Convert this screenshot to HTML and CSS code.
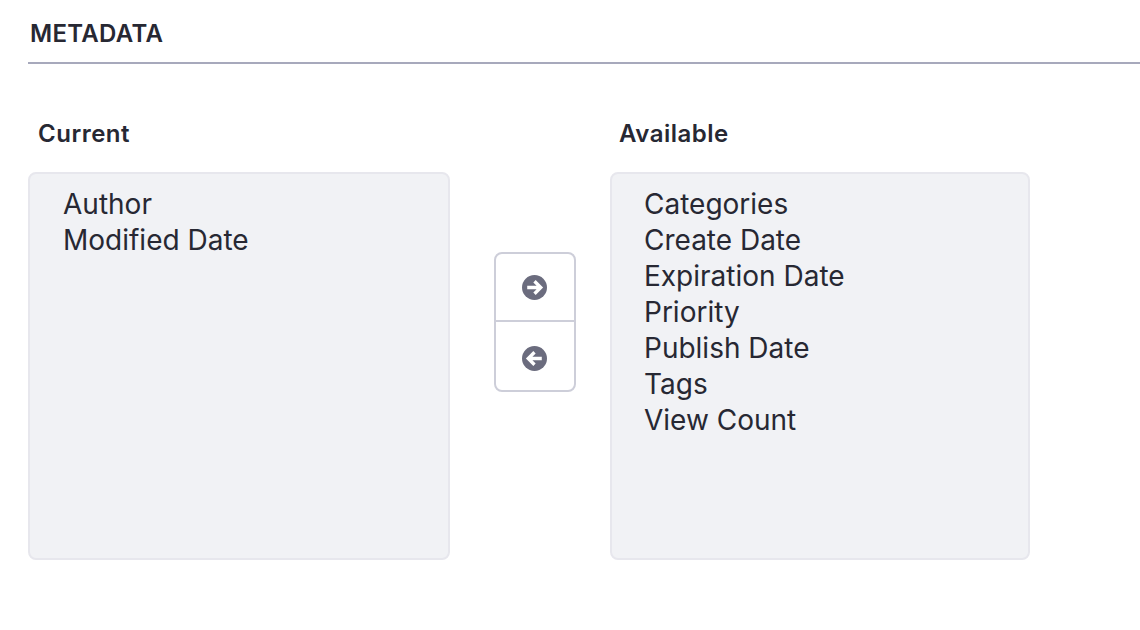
FILE: index.html
```html
<!DOCTYPE html>
<html lang="en">
<head>
  <meta charset="UTF-8">
  <meta name="viewport" content="width=device-width, initial-scale=1.0">
  <title>Metadata</title>
  <link rel="stylesheet" href="styles.css">
</head>
<body>
  <h2 class="section-title">METADATA</h2>
  <div class="selector">
    <div class="column column-current">
      <label class="column-label">Current</label>
      <ul class="item-list">
        <li>Author</li>
        <li>Modified Date</li>
      </ul>
    </div>
    <div class="move-buttons">
      <button class="move-button" type="button">
        <svg class="move-icon" viewBox="0 0 24 24">
          <circle cx="12" cy="12" r="12" fill="#6b6c7e"/>
          <path d="M5 12H17M12 6L18 12l-6 6" fill="none" stroke="#fff" stroke-width="3.2"/>
        </svg>
      </button>
      <button class="move-button" type="button">
        <svg class="move-icon" viewBox="0 0 24 24">
          <circle cx="12" cy="12" r="12" fill="#6b6c7e"/>
          <path d="M19 12H7M12 6L6 12l6 6" fill="none" stroke="#fff" stroke-width="3.2"/>
        </svg>
      </button>
    </div>
    <div class="column column-available">
      <label class="column-label">Available</label>
      <ul class="item-list">
        <li>Categories</li>
        <li>Create Date</li>
        <li>Expiration Date</li>
        <li>Priority</li>
        <li>Publish Date</li>
        <li>Tags</li>
        <li>View Count</li>
      </ul>
    </div>
  </div>
</body>
</html>
```

FILE: styles.css
```css
body {
  margin: 0;
  padding: 0 0 0 28px;
  background-color: #fff;
  color: #272833;
  font-family: Inter, "Liberation Sans", sans-serif;
  overflow: hidden;
}
.section-title {
  margin: 0;
  height: 62px;
  padding-left: 2px;
  border-bottom: 2px solid #a7a9bc;
  font-size: 24px;
  font-weight: 600;
  letter-spacing: 0.3px;
  line-height: 67px;
}
.selector {
  display: flex;
  align-items: flex-start;
  margin-top: 52px;
}
.column-current {
  width: 422px;
}
.column-available {
  width: 420px;
  margin-left: 34px;
}
.column-label {
  display: block;
  height: 36px;
  margin-bottom: 20px;
  padding-left: 10px;
  font-size: 24px;
  font-weight: 600;
  letter-spacing: 0.5px;
  line-height: 36px;
}
.column-available .column-label {
  padding-left: 9px;
}
.item-list {
  box-sizing: border-box;
  height: 388px;
  margin: 0;
  padding: 12px 34px;
  background-color: #f1f2f5;
  border: 2px solid #e7e7ed;
  border-radius: 8px;
  list-style: none;
  font-size: 28px;
  line-height: 36px;
}
.column-current .item-list {
  padding-left: 33px;
}
.column-available .item-list {
  padding-left: 32px;
}
.move-buttons {
  display: flex;
  flex-direction: column;
  box-sizing: border-box;
  width: 82px;
  height: 140px;
  margin: 136px 0 0 44px;
  background-color: #fff;
  border: 2px solid #cdced9;
  border-radius: 8px;
}
.move-button {
  display: flex;
  flex: 1;
  align-items: center;
  justify-content: center;
  padding: 0;
  background: none;
  border: 0;
}
.move-button:first-child {
  flex: none;
  height: 66px;
}
.move-button + .move-button {
  padding-top: 4px;
  border-top: 2px solid #cdced9;
}
.move-icon {
  display: block;
  width: 25px;
  height: 25px;
  margin-right: 1px;
}
```
